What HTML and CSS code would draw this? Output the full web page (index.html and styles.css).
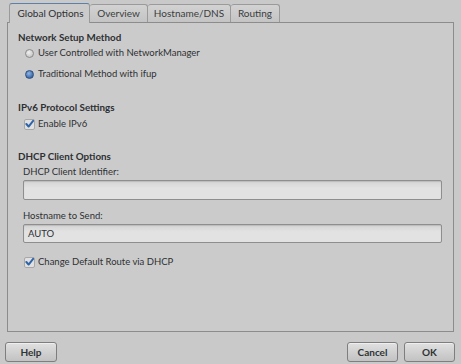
FILE: index.html
```html
<!DOCTYPE html>
<html>
<head>
<meta charset="utf-8">
<link rel="stylesheet" href="styles.css">
</head>
<body>
<div class="dialog">
  <div class="tabs">
    <div class="tab active">Global Options</div>
    <div class="tab t2">Overview</div>
    <div class="tab t3">Hostname/DNS</div>
    <div class="tab t4">Routing</div>
  </div>
  <div class="panel">
    <div class="section-title">Network Setup Method</div>
    <div class="option r1"><span class="radio"></span><span>User Controlled with NetworkManager</span></div>
    <div class="option r2"><span class="radio on"></span><span>Traditional Method with ifup</span></div>
    <div class="section-title s2">IPv6 Protocol Settings</div>
    <div class="option c1"><span class="check"><svg width="10" height="10" viewBox="0 0 10 10"><path d="M1.5 5 L4 7.8 L9 1.5" fill="none" stroke="#2f63a8" stroke-width="2.2" stroke-linecap="round" stroke-linejoin="round"/></svg></span><span>Enable IPv6</span></div>
    <div class="section-title s3">DHCP Client Options</div>
    <div class="field-label l1">DHCP Client Identifier:</div>
    <div class="entry e1"></div>
    <div class="field-label l2">Hostname to Send:</div>
    <div class="entry e2">AUTO</div>
    <div class="option c2"><span class="check"><svg width="10" height="10" viewBox="0 0 10 10"><path d="M1.5 5 L4 7.8 L9 1.5" fill="none" stroke="#2f63a8" stroke-width="2.2" stroke-linecap="round" stroke-linejoin="round"/></svg></span><span>Change Default Route via DHCP</span></div>
  </div>
  <div class="buttons">
    <div class="btn help">Help</div>
    <div class="spacer"></div>
    <div class="btn cancel">Cancel</div>
    <div class="btn ok">OK</div>
  </div>
</div>
</body>
</html>
```
FILE: styles.css
```css
html, body {
  margin: 0;
  padding: 0;
  background: #c9c9c9;
  width: 461px;
  height: 364px;
  overflow: hidden;
  font-family: Lato, "Open Sans", sans-serif;
  font-size: 9.5px;
  color: #2e3033;
}
.dialog {
  padding: 3px 7px 0 7px;
  display: flex;
  flex-direction: column;
}
.tabs {
  display: flex;
  padding-left: 2px;
  height: 19px;
  position: relative;
  z-index: 1;
}
.tab {
  height: 18px;
  margin-top: 1px;
  line-height: 17px;
  border: 1px solid #9a9a9a;
  border-bottom: none;
  border-left: none;
  background: linear-gradient(#d2d2d2, #c4c4c4);
  color: #3a3d40;
  border-radius: 3px 3px 0 0;
  box-sizing: border-box;
  text-align: center;
  font-size: 10px;
}
.tab.active {
  width: 81px;
  height: 20px;
  margin-top: 0;
  border-left: 1px solid #9a9a9a;
  border-top: 1px solid #5d7fa8;
  background: #cbcbcb;
  line-height: 18px;
  color: #2e3033;
  padding-left: 2px;
}
.t2 { width: 58px; }
.t3 { width: 83px; }
.t4 { width: 49px; }
.panel {
  margin-top: 0;
  width: 447px;
  height: 310px;
  box-sizing: border-box;
  border: 1px solid #8c8c8c;
  background: #cbcbcb;
  padding: 7px 11px 0 10px;
  display: flex;
  flex-direction: column;
}
.section-title {
  font-weight: bold;
  font-size: 9.8px;
  height: 14px;
  line-height: 14px;
}
.s2 { margin-top: 19px; }
.s3 { margin-top: 18px; }
.option {
  display: flex;
  align-items: center;
  height: 14px;
  line-height: 14px;
  margin-left: 7px;
}
.r1 { margin-top: 2px; }
.r2 { margin-top: 7px; }
.c1 { margin-top: 3px; }
.c2 { margin-top: 12px; }
.radio {
  width: 7px;
  height: 7px;
  border-radius: 50%;
  border: 1px solid #8a8a8a;
  background: radial-gradient(circle at 40% 35%, #f0f0f0, #b8b8b8);
  margin-right: 4px;
}
.radio.on {
  border-color: #2c4f80;
  background: radial-gradient(circle at 40% 35%, #8fb6e6, #3d6aa8 70%);
}
.check {
  width: 11px;
  height: 11px;
  margin-left: -1px;
  margin-right: 3px;
  display: flex;
  align-items: center;
  justify-content: center;
  border: 1px solid #a8a8a8;
  border-radius: 2px;
  box-sizing: border-box;
  background: #e0e0e0;
}
.field-label {
  margin-left: 5px;
  height: 14px;
  line-height: 14px;
}
.l1 { margin-top: 2px; }
.l2 { margin-top: 9px; }
.entry {
  margin-left: 5px;
  width: 419px;
  height: 20px;
  box-sizing: border-box;
  border: 1px solid #8e8e8e;
  border-radius: 2px;
  background: linear-gradient(#d4d4d4, #e2e2e2 40%, #e2e2e2);
  box-shadow: inset 0 1px 1px rgba(0,0,0,0.12);
  padding-left: 4px;
  line-height: 18px;
}
.e1 { margin-top: 1px; }
.e2 { margin-top: 1px; height: 19px; line-height: 17px; }
.buttons {
  display: flex;
  margin-top: 10px;
  margin-left: -2px;
  margin-right: -1px;
}
.spacer { flex: 1; }
.btn {
  height: 20px;
  box-sizing: border-box;
  border: 1px solid #7e7e7e;
  border-radius: 3px;
  background: linear-gradient(#e0e0e0, #c2c2c2);
  box-shadow: inset 0 1px 0 rgba(255,255,255,0.5);
  text-align: center;
  line-height: 18px;
  font-weight: bold;
  font-size: 10px;
  color: #2e3436;
}
.help { width: 52px; }
.cancel { width: 51px; margin-right: 6px; }
.ok { width: 51px; }
```
